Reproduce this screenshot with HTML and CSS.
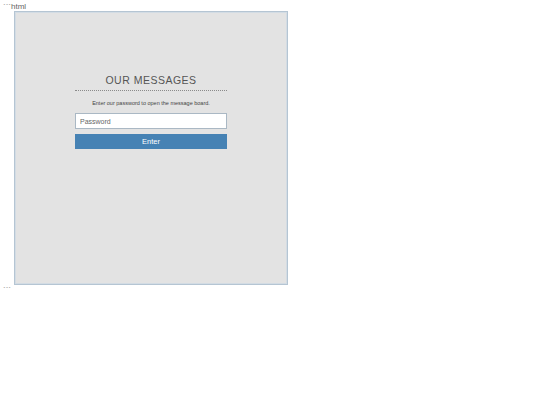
FILE: index.html
```html
<!DOCTYPE html>
<html>
<head>
<meta charset="utf-8">
<link rel="stylesheet" href="styles.css">
</head>
<body>
<div class="fence">```html</div>
<div class="frame">
  <div class="panel">
    <h1 class="title">OUR MESSAGES</h1>
    <p class="hint">Enter our password to open the message board.</p>
    <input class="pw" type="password" placeholder="Password">
    <button class="btn">Enter</button>
  </div>
</div>
<div class="fence">```</div>
</body>
</html>
```
FILE: styles.css
```css
html, body {
  margin: 0;
  background: #ffffff;
}
body {
  padding: 2px 3px;
  font-family: "Liberation Sans", Arial, sans-serif;
}
.fence {
  font-family: "Liberation Sans", Arial, sans-serif;
  font-size: 8px;
  line-height: 9px;
  color: #666;
}
.frame {
  margin-left: 11px;
  width: 274px;
  height: 274px;
  box-sizing: border-box;
  border: 1px solid #b5c5d3;
  box-shadow: inset 0 0 0 1px #d3dce4;
  background: #e3e3e3;
  display: flex;
  justify-content: center;
}
.panel {
  width: 152px;
  padding-top: 62px;
  display: flex;
  flex-direction: column;
  align-items: stretch;
}
.title {
  margin: 0;
  font-size: 10.5px;
  font-weight: normal;
  letter-spacing: 0.5px;
  color: #555;
  text-align: center;
  line-height: 13px;
  padding-bottom: 3px;
  border-bottom: 1px dotted #8a8a8a;
}
.hint {
  margin: 9px 0 6px;
  font-size: 5.5px;
  line-height: 7px;
  color: #444;
  text-align: center;
}
.pw {
  box-sizing: border-box;
  height: 16px;
  margin: 0;
  padding: 0 4px;
  border: 1px solid #aab8c4;
  background: #fff;
  font-family: "Liberation Sans", Arial, sans-serif;
  font-size: 7px;
  color: #555;
  outline: none;
}
.pw::placeholder { color: #666; }
.btn {
  margin-top: 5px;
  height: 15px;
  border: none;
  background: #4682b4;
  color: #fff;
  font-family: "Liberation Sans", Arial, sans-serif;
  font-size: 7.5px;
  padding: 0;
}
```
